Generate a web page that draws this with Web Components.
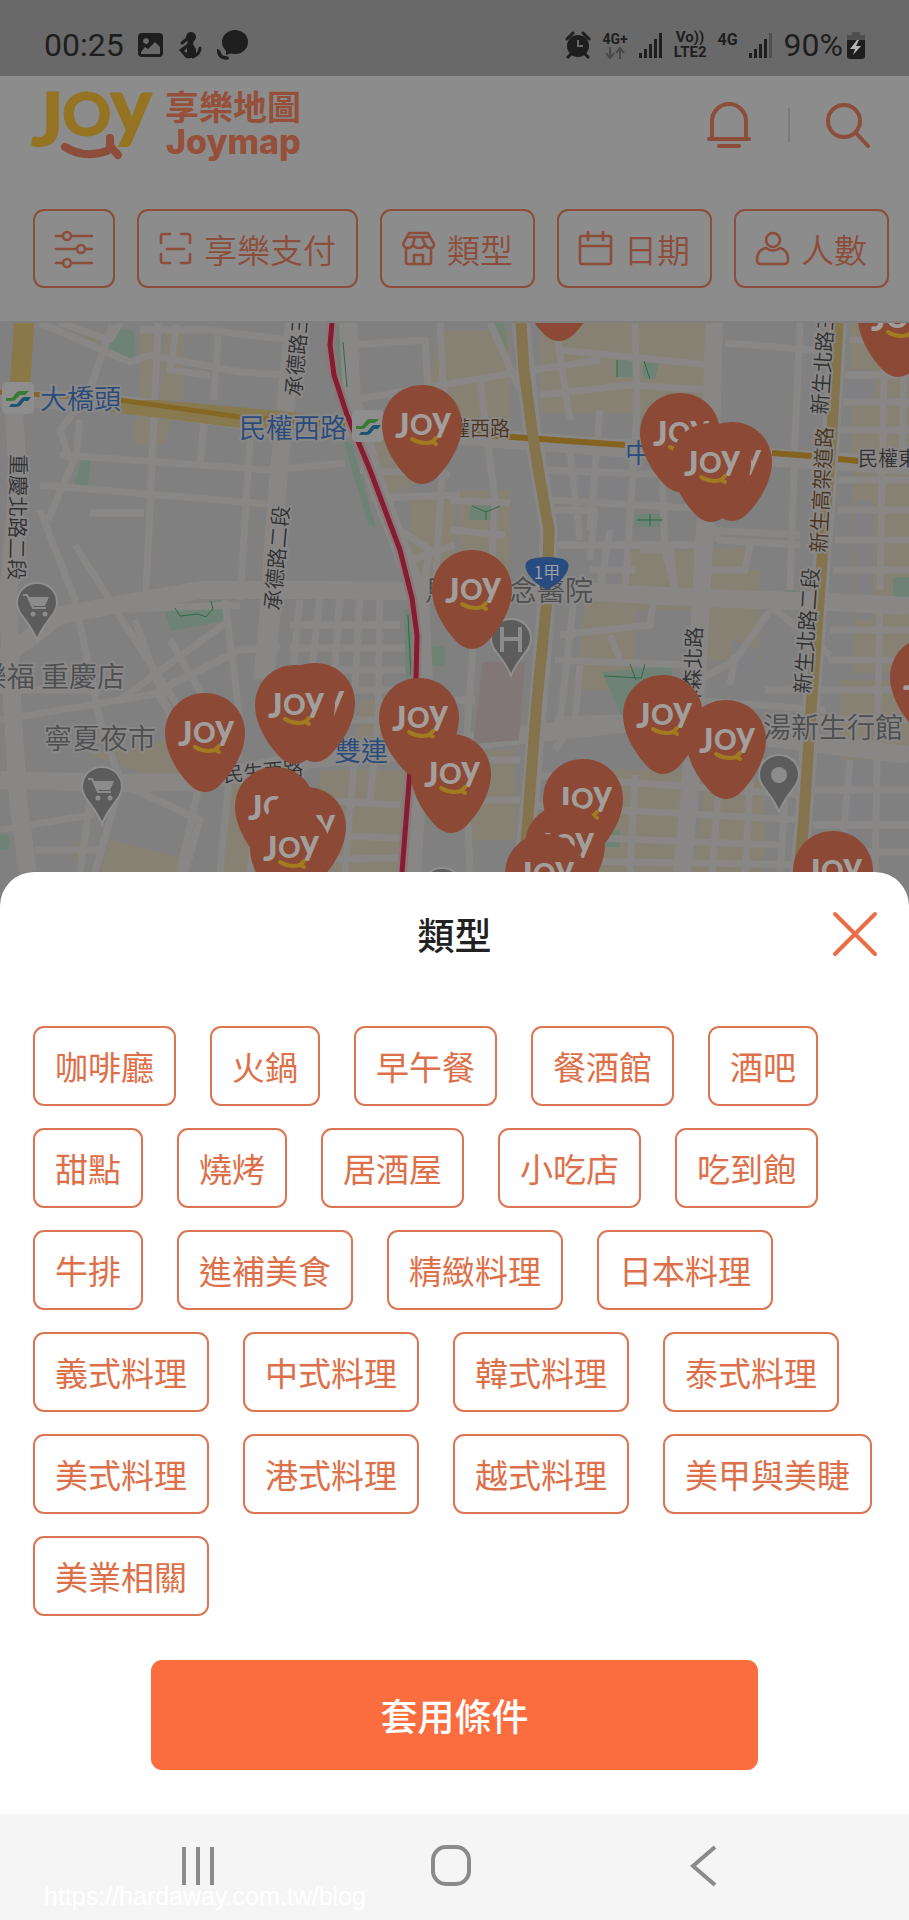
<!DOCTYPE html>
<html lang="zh-Hant">
<head>
<meta charset="utf-8">
<meta name="viewport" content="width=device-width, initial-scale=1">
<title>JOY 享樂地圖</title>
<style>
  body { margin: 0; background: #fff; font-family: "Noto Sans CJK TC", "Noto Sans", sans-serif; }
</style>
</head>
<body>
<joy-screen>
  <status-bar slot="status"></status-bar>
  <app-header slot="header">
    <filter-chip icon="sliders" label="篩選"></filter-chip>
    <filter-chip icon="scan">享樂支付</filter-chip>
    <filter-chip icon="store">類型</filter-chip>
    <filter-chip icon="calendar">日期</filter-chip>
    <filter-chip icon="person">人數</filter-chip>
  </app-header>
  <city-map slot="map"></city-map>
  <filter-sheet slot="sheet" heading="類型" action="套用條件">
    <type-chip>咖啡廳</type-chip><type-chip>火鍋</type-chip><type-chip>早午餐</type-chip><type-chip>餐酒館</type-chip><type-chip>酒吧</type-chip>
    <type-chip>甜點</type-chip><type-chip>燒烤</type-chip><type-chip>居酒屋</type-chip><type-chip>小吃店</type-chip><type-chip>吃到飽</type-chip>
    <type-chip>牛排</type-chip><type-chip>進補美食</type-chip><type-chip>精緻料理</type-chip><type-chip>日本料理</type-chip>
    <type-chip>義式料理</type-chip><type-chip>中式料理</type-chip><type-chip>韓式料理</type-chip><type-chip>泰式料理</type-chip>
    <type-chip>美式料理</type-chip><type-chip>港式料理</type-chip><type-chip>越式料理</type-chip><type-chip>美甲與美睫</type-chip>
    <type-chip>美業相關</type-chip>
  </filter-sheet>
  <nav-bar slot="nav"></nav-bar>
</joy-screen>

<script>
const define = (name, render) => customElements.define(name, class extends HTMLElement {
  constructor() {
    super();
    this.attachShadow({ mode: 'open' }).innerHTML = render(this);
  }
});

define('joy-screen', () => `
<style>
  :host { display: flex; flex-direction: column; min-height: 100vh; }
  ::slotted(filter-sheet) { position: relative; margin-top: -34px; flex: 1; }
</style>
<slot name="status"></slot><slot name="header"></slot><slot name="map"></slot><slot name="sheet"></slot><slot name="nav"></slot>`);

define('status-bar', () => `
<style>
  :host { display: flex; align-items: center; justify-content: space-between; box-sizing: border-box;
    height: 76px; padding: 14px 44px 0; background: #696969; color: #1e1e1e; font-family: Roboto, sans-serif; }
  .group { display: flex; align-items: center; gap: 14px; }
  .group.right { gap: 11px; }
  .big { font-size: 32px; line-height: 38px; font-weight: 400; }
  .net { display: flex; flex-direction: column; align-items: center; font-size: 15px; line-height: 15px; font-weight: 700; }
  .net.small { font-size: 14px; }
  .net.high { padding-bottom: 12px; font-size: 16px; }
  .power { display: flex; align-items: center; gap: 4px; }
  svg { display: block; fill: #1e1e1e; }
</style>
<div class="group">
  <span class="big">00:25</span>
  <svg width="26" height="26" viewBox="0 0 26 26"><path fill-rule="evenodd" d="M4 1h17a4 4 0 0 1 4 4v16a4 4 0 0 1-4 4H4a4 4 0 0 1-4-4V5a4 4 0 0 1 4-4zM3 20v2h19v-7l-5-5-7 7-3-2zM8 6a3 3 0 1 0 .1 0z"/></svg>
  <svg width="24" height="28" viewBox="0 0 24 28"><circle cx="13" cy="6" r="5"/><path d="M10 9h6l-1 4 3 5v6q-4 4-10 3L1 19l8-6zM6 20l3-3v5z" fill-rule="evenodd"/><path d="M9 8L4 12M22 17q0 6-7 9" fill="none" stroke="#1e1e1e" stroke-width="3" stroke-linecap="round"/></svg>
  <svg width="32" height="32" viewBox="0 0 32 32"><ellipse cx="19" cy="13" rx="13" ry="12"/><path d="M10 19v7l8-3zM1 20c2 0 3 1 4 4 1 2 2 3 4 3 3 0 4 1 4 3-4 2-13 0-12-10z"/></svg>
</div>
<div class="group right">
  <svg width="26" height="28" viewBox="0 0 26 28"><circle cx="13" cy="15" r="11"/><path d="M2 8l6-6M24 8l-6-6M6 23l-3 3M20 23l3 3" stroke="#1e1e1e" stroke-width="3" stroke-linecap="round"/><path d="M13 9v6h5" stroke="#696969" stroke-width="2" fill="none"/></svg>
  <span class="net small">4G+<svg width="20" height="12" viewBox="0 0 20 12"><path d="M5 0v10M1 6l4 5 4-5M15 12V2M11 6l4-5 4 5" fill="none" stroke="#484848" stroke-width="2"/></svg></span>
  <svg width="24" height="26" viewBox="0 0 24 26"><path d="M0 21h3v5H0zM5 17h3v9H5zM10 12h3v14h-3zM15 7h3v19h-3zM20 1h3v25h-3z"/></svg>
  <span class="net"><span>Vo))</span><span>LTE2</span></span>
  <span class="net high">4G</span>
  <svg width="24" height="26" viewBox="0 0 24 26"><path d="M0 21h3v5H0zM5 17h3v9H5zM10 12h3v14h-3zM15 7h3v19h-3z"/><path fill="#505050" d="M20 1h3v25h-3z"/></svg>
  <span class="power"><span class="big">90%</span>
  <svg width="18" height="28" viewBox="0 0 18 28"><path fill="#505050" d="M5 1h8v3h5v7H0V4h5z"/><path d="M0 9h18v16a3 3 0 0 1-3 3H3a3 3 0 0 1-3-3z"/><path fill="#b4b4b4" d="M10 9L3 18h5l-2 6 8-9H9l3-6z"/></svg></span>
</div>`);

const LINE = '#8c4d3a';

define('app-header', () => `
<style>
  :host { display: block; background: #8c8c8c; border-bottom: 2px solid #808080; overflow: hidden; }
  .top { display: flex; align-items: flex-start; justify-content: space-between; padding: 13px 38px 0 32px; height: 120px; box-sizing: border-box; }
  .tools { display: flex; align-items: center; padding-top: 13px; }
  .tools i { width: 2px; height: 34px; background: #7b7b7b; margin: 0 35px 0 37px; }
  button { all: unset; display: block; height: 46px; }
  svg { display: block; overflow: visible; }
  nav { display: flex; gap: 22px; padding: 13px 20px 33px 33px; }
  text { font-family: Lato, "Open Sans", sans-serif; font-weight: 900; }
  .zh { font-family: "Noto Sans CJK TC", sans-serif; font-weight: 700; }
  .name { font-family: Inter, sans-serif; font-weight: 800; }
</style>
<div class="top">
  <svg width="274" height="74" viewBox="0 0 274 74" role="img" aria-label="JOY 享樂地圖 Joymap">
    <g fill="#947422" stroke="#947422" stroke-width="1" stroke-linejoin="round">
      <text x="-1" y="57" font-size="75">J</text><text x="30" y="47" font-size="61">O</text><text x="78" y="44" font-size="79">y</text>
    </g>
    <path d="M33 58Q52 70 75 62Q79 59 78 49M78 57L86 66" fill="none" stroke="${LINE}" stroke-width="8" stroke-linecap="round" stroke-linejoin="round"/>
    <g fill="#964f39">
      <text class="zh" x="133" y="31" font-size="34">享樂地圖</text>
      <text class="name" x="134" y="65" font-size="34">Joymap</text>
    </g>
  </svg>
  <div class="tools">
    <button aria-label="通知"><svg width="44" height="46" viewBox="0 0 44 46" fill="none" stroke="${LINE}" stroke-width="4" stroke-linecap="round"><path d="M5 36V19a17 17 0 0 1 34 0v17M2 37h40M12 44h20"/></svg></button>
    <i></i>
    <button aria-label="搜尋"><svg width="46" height="46" viewBox="0 0 46 46" fill="none" stroke="${LINE}" stroke-width="4" stroke-linecap="round"><circle cx="19" cy="19" r="16"/><path d="M31 31l12 13"/></svg></button>
  </div>
</div>
<nav><slot></slot></nav>`);

const ICONS = {
  sliders: '<svg width="38" height="38" viewBox="0 0 38 38"><path d="M1 6h7M17 6h20M1 19h20M31 19h6M1 33h7M17 33h20"/><circle cx="12" cy="6" r="4"/><circle cx="26" cy="19" r="4"/><circle cx="12" cy="33" r="4"/></svg>',
  scan: '<svg width="33" height="33" viewBox="0 0 33 33"><path d="M2 11V4a2 2 0 0 1 2-2h7M22 2h7a2 2 0 0 1 2 2v7M31 22v7a2 2 0 0 1-2 2h-7M11 31H4a2 2 0 0 1-2-2v-7M8 17h17"/></svg>',
  store: '<svg width="33" height="33" viewBox="0 0 33 33"><path d="M7 1h19l6 11q0 4-4 4t-5-4q-1 4-6 4t-6-4q-1 4-5 4t-5-4zM5 5h23M13 5l-2 7M20 5l3 7M4 16v14q0 2 2 2h21q2 0 2-2V16M12 32v-9h9v9"/></svg>',
  calendar: '<svg width="33" height="33" viewBox="0 0 33 33"><path d="M3 4h27q2 0 2 2v24q0 2-2 2H3q-2 0-2-2V6q0-2 2-2zM1 14h31M9 0v8M24 0v8"/></svg>',
  person: '<svg width="33" height="33" viewBox="0 0 33 33"><circle cx="17" cy="8" r="7"/><path d="M10 16q7 5 14 0 8 2 8 12 0 4-4 4H5q-4 0-4-4 0-10 9-12z"/></svg>'
};

define('filter-chip', el => `
<style>
  :host { display: block; flex: none; }
  button { display: flex; align-items: center; gap: 12px; box-sizing: border-box; height: 79px; margin: 0; padding: 0 20px;
    border: 2px solid #8c4d3a; border-radius: 11px; background: none; color: #8c4d3a; font: 350 33px/48px "Noto Sans CJK TC", sans-serif; }
  svg { display: block; overflow: visible; fill: none; stroke: #8c4d3a; stroke-width: 2.6; stroke-linecap: round; stroke-linejoin: round; }
</style>
<button ${el.getAttribute('label') ? `aria-label="${el.getAttribute('label')}"` : ''}>${ICONS[el.getAttribute('icon')]}${el.getAttribute('label') ? '' : '<slot></slot>'}</button>`);

define('type-chip', () => `
<style>
  :host { display: block; }
  button { display: block; box-sizing: border-box; height: 80px; margin: 0; padding: 0 20px; border: 2px solid #dc7552; border-radius: 11px;
    background: #fff; color: #dd7048; font: 400 33px/48px "Noto Sans CJK TC", sans-serif; white-space: nowrap; }
</style>
<button><slot></slot></button>`);

define('filter-sheet', el => `
<style>
  :host { display: block; background: #fff; border-radius: 34px 34px 0 0; }
  header { display: grid; grid-template-columns: 1fr auto 1fr; align-items: center; padding: 35px 31px 65px; }
  h2 { grid-column: 2; margin: 0; font-size: 37px; line-height: 54px; font-weight: 500; color: #222; }
  .close { all: unset; justify-self: end; }
  svg { display: block; }
  .types { display: flex; flex-wrap: wrap; gap: 22px 34px; padding: 0 33px; }
  .apply { display: block; width: 66.8%; height: 110px; margin: 44px auto; padding: 0; border: 0; border-radius: 11px;
    background: #fb6c3e; color: #fff; font: 500 37px/54px "Noto Sans CJK TC", sans-serif; }
</style>
<header><h2>${el.getAttribute('heading')}</h2>
  <button class="close" aria-label="關閉"><svg width="46" height="46" viewBox="0 0 46 46"><path d="M3 3l40 40M43 3L3 43" stroke="#ea6e45" stroke-width="4" stroke-linecap="round"/></svg></button>
</header>
<div class="types"><slot></slot></div>
<button class="apply">${el.getAttribute('action')}</button>`);

define('nav-bar', () => `
<style>
  :host { display: grid; grid-template-columns: 1fr 1fr 1fr; position: relative; box-sizing: border-box; height: 106px; padding: 31px 78px 0 71px; background: #f5f5f5; }
  button { all: unset; justify-self: center; height: 42px; }
  svg { display: block; fill: none; stroke: #8b8b8b; stroke-width: 4; }
  a { position: absolute; left: 44px; bottom: 10px; color: #fff; text-decoration: none; font: 25px/28px "Liberation Sans", Arial, sans-serif; }
</style>
<button aria-label="最近使用"><svg width="42" height="42" viewBox="0 0 42 42"><path d="M7 2v38M21 2v38M35 2v38"/></svg></button>
<button aria-label="主畫面"><svg width="42" height="42" viewBox="0 0 42 42"><rect x="3" y="2" width="36" height="37" rx="13"/></svg></button>
<button aria-label="返回"><svg width="42" height="42" viewBox="0 0 42 42"><path d="M32 2L10 21l22 19"/></svg></button>
<a href="https://hardaway.com.tw/blog">https://hardaway.com.tw/blog</a>`);

/* Map: drawing coordinates share one plane, roads first, labels next, pins last. */
const joyPins = [[559,242],[898,278],[422,385],[680,393],[732,422],[711,423],[472,550],[930,637],[205,693],[315,663],[295,665],
  [419,678],[451,734],[275,767],[306,787],[290,808],[663,675],[726,700],[583,759],[565,805],[545,834],[833,831]];
const greyPins = [[37,583,'cart'],[102,767,'cart'],[511,619,'H'],[779,755,'dot'],[442,868,'dot']];
const glyph = {
  cart: '<path d="M-14-8h4l6 13H9" fill="none" stroke="#8c8c8c" stroke-width="2"/><path d="M-9-6H12L8 3H-5z" fill="#8c8c8c"/><circle cx="-4" cy="11" r="2.5" fill="#8c8c8c"/><circle cx="8" cy="11" r="2.5" fill="#8c8c8c"/>',
  H: '<path d="M-9-12V13M9-12V13M-9 0H9" stroke="#8c8c8c" stroke-width="4"/>',
  dot: '<circle r="8" fill="#8c8c8c"/>'
};
const label = (x, y, size, kind, text, angle = 0, anchor = 'start') =>
  `<text class="${kind}" font-size="${size}" text-anchor="${anchor}" transform="translate(${x} ${y}) rotate(${angle})">${text}</text>`;

define('city-map', () => `
<style>
  :host { display: block; height: 583px; overflow: hidden; background: #808081; }
  svg.map { display: block; width: 100%; height: 100%; }
  text { font-family: "Noto Sans CJK TC", sans-serif; font-weight: 350; paint-order: stroke; stroke: #8a8887; stroke-width: 4; stroke-linejoin: round; }
  .road { fill: #303234; } .brown { fill: #4a3420; } .blue { fill: #284b7c; } .poi { fill: #4c4e50; }
  .pin text { font-family: Lato, sans-serif; font-weight: 900; fill: #a29e9c; stroke: none; }
  .r { fill: none; stroke: #898785; stroke-linejoin: round; }
</style>
<svg class="map" viewBox="0 323 909 583" preserveAspectRatio="xMidYMin slice">
  <defs>
    <g id="joy" class="pin"><path fill="#8c4a36" d="M0 0C23 0 40 18 40 40C40 60 26 82 13 94Q0 104-13 94C-26 82-40 60-40 40C-40 18-23 0 0 0z"/>
      <text x="-27" y="53" font-size="34">J</text><text x="-12" y="50" font-size="28">O</text><text x="10" y="47" font-size="36">y</text>
      <path d="M-10 54Q0 60 10 57L14 53M11 57L14 59" fill="none" stroke="#a27a20" stroke-width="4" stroke-linecap="round"/></g>
    <path id="poi" fill="#5c5c5c" stroke="#8f8f8f" stroke-width="2" d="M0 0C12 0 20 9 20 20C20 32 7 38 0 57C-7 38-20 32-20 20C-20 9-12 0 0 0z"/>
  </defs>

  <g fill="#868173">
    <path d="M370 420h55v60l-50 20zM410 500h45v90h-45zM440 330h70v90h-90zM540 323h170v90H540zM700 323h10v20zM540 335h60v70h-50z"/>
    <path d="M84 335h15l-2 15-15-8zM141 332h12v110h-14zM164 330h20v70h-24zM134 420h38l-8 24h-30z"/>
    <path d="M460 490h50v120h-50zM585 600h50v90h-60zM620 550h80v60h-80zM705 548h40v22h-40zM705 570h55v90h-60z"/>
    <path d="M850 323h59v350h-55zM555 770h140v102H545zM840 680h69v80h-69zM705 780h60v92h-70z"/>
    <path d="M90 755l110-20-8 55zM120 780h50l-20 10zM360 700h38v60h-45zM320 770h85v102h-90zM110 840l80 20v12h-90zM230 780h30v92h-40zM70 850l20-25-10 47zM470 750h45v90h-50z"/>
  </g>
  <g fill="#808083">
    <path d="M850 370h25v30h-25zM855 500h18v120h-18zM850 760h28v70h-30zM730 640l32 10-20 30zM690 440h40v50h-40zM560 450h60v50h-56zM590 520h40v50h-40z"/>
  </g>
  <g fill="#6e8275"><path d="M117 327l18 5-1 28-28-6zM82 457l9 1-3 28-14-1zM165 612l58-13v22l-52 10zM338 323h8l4 65-9 6-6-50zM343 440l9 4 24 84-8-4zM404 610h10v70h-8zM428 646h17v20h-17zM617 360h18v17h-18zM643 361h16l-4 18-12-1zM635 514h29v13h-29zM471 502h30l-5 18h-27zM602 672l70-6v40l-50 10zM495 323h9l4 30zM0 835h9v15H0zM605 830h15v17h-15zM785 590h12v12h-14zM893 577h16v30h-16z"/></g>

  <g class="r" stroke-width="18">
    <path d="M294 323L284 420 276 505 268 620 262 680M14 410L18 480 8 600 12 700 18 800 28 872M0 780L120 783 200 782 300 760 400 752 520 735 640 722 909 755"/>
    <path d="M0 397L120 404 240 420 345 427 460 436 620 448 780 458 909 466M521 323L532 430 549 530 545 620 532 780 522 872M838 323L828 480 815 650 803 830 799 872"/>
    <path d="M0 660L60 615 200 590 330 590 440 592 560 590 700 598 830 602 909 606"/>
    <path d="M714 323L711 440 703 560 697 680 690 790 682 872M348 323L352 400 375 480 420 600 424 680 418 780 412 872"/>
  </g>
  <g class="r" stroke-width="7">
    <path d="M40 323L130 362 150 355 240 372 288 375M60 323L110 340 120 323M112 325L88 395 60 430 70 460M158 323L155 395 146 595M218 335L214 400M177 325L170 370 210 375M140 330h70l80 10M204 420L200 465M250 440L240 600M80 420L76 455 48 520M60 455L270 470 345 463M40 485L280 505M90 513h54"/>
    <path d="M40 510L75 600 100 720 120 780M75 545L135 640 200 740M0 720L150 695 240 650 280 648M120 700L230 620M135 620L190 770M170 640L240 760M100 610L240 605M225 600L240 720M0 690h100M155 690l60 90M280 590L268 700 300 740M300 600L290 700M320 595L312 670M340 593L334 680M360 592L355 690M380 590L378 720M290 625h110M290 648h115M285 670h120M280 690h115"/>
    <path d="M0 830L90 815 100 783M90 800L80 872M120 785L95 872M35 850h65M120 783L200 820 185 872M200 780L180 872M230 770L220 872M260 780L250 872M355 750L345 872M310 800L400 805M320 835L400 838M300 860L400 858M380 700L370 800M330 720h80"/>
    <path d="M350 345L425 340 430 420M352 400L520 372 600 360M440 323L445 420 435 590M480 380L495 500 490 590M360 470L450 475M370 498L460 495M385 520L430 550 420 600M410 560L455 545M450 500L510 503M450 530L505 535"/>
    <path d="M490 323L520 390M555 323L570 420M635 323L637 410 625 590M560 350L710 365M540 395L630 385 710 390M600 410L590 530M545 470L700 476M550 500L725 510M555 545L700 545M570 450L580 540M660 410L665 550 675 590M545 510L595 510 590 560M610 530L600 590M640 550L670 550 675 590M590 570h45M705 530L800 535M705 530L720 540 800 545M750 545L745 570 705 570"/>
    <path d="M800 323L795 440 790 590M725 343L838 352M850 340h59M845 375h64M843 402h66M840 430h69M838 480h71M838 510h71M835 540h74M833 570h76M885 323L880 590M905 323L902 460"/>
    <path d="M575 590L560 720M560 635L650 625 655 590M610 635L620 660M555 660L690 665M580 665L575 720 555 750M700 680L735 660 770 610M735 655l-5 30M770 605L830 655M690 700L825 710M555 720L620 718M765 690h60M830 630h79M828 660h81M825 690h84M880 600L875 872M909 720h-90M815 790h94M813 825h96M810 852h99M850 760L840 872"/>
    <path d="M530 775L800 795M525 805L800 820M520 835L780 845M515 860L800 865M560 770L555 872M595 765L590 872M635 775L630 872M720 775L712 872M750 780L745 872M785 800L780 872M760 760L780 790M475 620L465 760 470 872M455 700h20M460 760h60M470 800h50"/>
  </g>
  <path fill="#807776" d="M483 662h42l-6 78-46 4z"/>
  <path d="M343 342l4 45M175 608l5 8 18-2 8 3 7-8-2-8M617 360v17M644 361l6 18M637 520h26M650 514v12M472 506l14 6 14-6M486 512v8M630 664l6 16M645 664l-4 15M604 676l36 2M408 615l3 60" fill="none" stroke="#2f6b43"/>

  <path d="M14 323L34 323 30 395 9 395z" fill="#8b7848"/>
  <path d="M110 400L158 400 280 411 345 418 345 432 240 428 110 412z" fill="#89794e"/>
  <path d="M0 392L120 400 240 417 345 425" fill="none" stroke="#866825" stroke-width="5"/>
  <path d="M460 433L512 437 625 445M772 453L812 456M838 459L870 462" fill="none" stroke="#846321" stroke-width="6"/>
  <path d="M521 323L524 370 532 430 540 480 549 530 547 600 537 700 527 830 523 872M838 323L832 430 822 560 811 710 803 830 799 872" fill="none" stroke="#83744d" stroke-width="11"/>
  <path d="M332 323L330 345 334 375 347 415 370 470 400 550 412 598 417 635 416 680 410 770 402 872" fill="none" stroke="#8b7778" stroke-width="10"/>
  <path d="M332 323L330 345 334 375 347 415 370 470 400 550 412 598 417 635 416 680 410 770 402 872" fill="none" stroke="#861b31" stroke-width="5"/>

  <g fill="#8e8e8e"><rect x="2" y="382" width="32" height="32" rx="5"/><rect x="352" y="410" width="32" height="32" rx="5"/></g>
  <g id="metro"><path d="M6 398h6l4-5q1-2 4-2h9l-4 4h-5l-4 4q-1 2-4 2H6z" fill="#397a35"/><path d="M11 404h6l4-5q1-2 4-2h6l-3 4h-4l-3 4q-2 2-5 2h-7z" fill="#1d5570"/></g>
  <use href="#metro" x="350" y="28"/>

  ${label(40,409,27,'blue','大橋頭')}
  ${label(239,438,27,'blue','民權西路')}
  ${label(334,761,27,'blue','雙連')}
  ${label(625,463,27,'blue','中')}
  ${label(430,436,20,'brown','民權西路')}
  ${label(858,466,20,'road','民權東路')}
  ${label(301,397,21,'road','承德路三段',-85)}
  ${label(280,611,21,'road','承德路二段',-85)}
  ${label(11,454,21,'road','重慶北路二段',91)}
  ${label(827,415,21,'road','新生北路三段',-86)}
  ${label(826,553,21,'brown','新生高架道路',-87)}
  ${label(810,694,21,'road','新生北路二段',-86)}
  ${label(699,711,21,'road','林森北路',-88)}
  ${label(224,782,20,'road','民生西路',-5)}
  ${label(425,601,28,'poi','馬偕紀念醫院')}
  ${label(125,687,28,'poi','家樂福 重慶店',0,'end')}
  ${label(44,749,28,'poi','寧夏夜市')}
  ${label(903,738,28,'poi','湯新生行館',0,'end')}

  <path d="M531 559q16-4 32 0 10 4 2 16-6 8-10 10l-8 5-8-5q-4-2-10-10-8-12 2-16z" fill="#284c80"/>
  <text x="547" y="579" font-size="17" text-anchor="middle" style="fill:#a0a4aa;stroke:none">1甲</text>

  ${greyPins.map(([x, y, kind]) => `<use href="#poi" x="${x}" y="${y}"/><g transform="translate(${x} ${y + 20})">${glyph[kind]}</g>`).join('')}
  ${joyPins.map(([x, y]) => `<use href="#joy" x="${x}" y="${y}"/>`).join('')}
</svg>`);
</script>
</body>
</html>
